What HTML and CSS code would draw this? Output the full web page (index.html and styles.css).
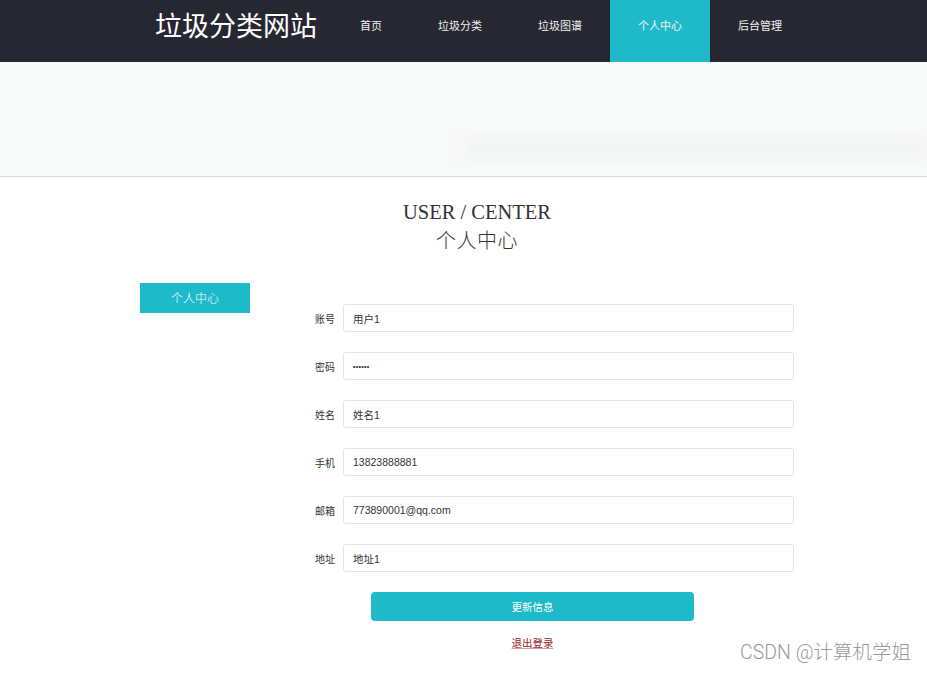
FILE: index.html
```html
<!DOCTYPE html>
<html lang="zh">
<head>
<meta charset="utf-8">
<title>垃圾分类网站 - 个人中心</title>
<link rel="stylesheet" href="styles.css">
</head>
<body>
<header class="topbar">
  <div class="topbar-inner">
    <div class="logo">垃圾分类网站</div>
    <nav class="nav">
      <a class="nav-item">首页</a>
      <a class="nav-item">垃圾分类</a>
      <a class="nav-item">垃圾图谱</a>
      <a class="nav-item active">个人中心</a>
      <a class="nav-item">后台管理</a>
    </nav>
  </div>
</header>
<div class="banner"><div class="banner-shade"></div></div>
<section class="page">
  <div class="page-title">
    <div class="en">USER / CENTER</div>
    <div class="cn">个人中心</div>
  </div>
  <div class="main">
    <aside class="side">
      <div class="side-item">个人中心</div>
    </aside>
    <form class="form">
      <div class="row"><label class="lbl">账号</label><input class="ipt" type="text" value="用户1"></div>
      <div class="row"><label class="lbl">密码</label><input class="ipt pwd" type="password" value="123456"></div>
      <div class="row"><label class="lbl">姓名</label><input class="ipt" type="text" value="姓名1"></div>
      <div class="row"><label class="lbl">手机</label><input class="ipt" type="text" value="13823888881"></div>
      <div class="row"><label class="lbl">邮箱</label><input class="ipt" type="text" value="773890001@qq.com"></div>
      <div class="row"><label class="lbl">地址</label><input class="ipt" type="text" value="地址1"></div>
      <div class="actions">
        <button class="btn" type="button">更新信息</button>
        <a class="logout">退出登录</a>
      </div>
    </form>
  </div>
</section>
<div class="watermark">CSDN @计算机学姐</div>
</body>
</html>
```
FILE: styles.css
```css
* { box-sizing: border-box; }
html, body { margin: 0; padding: 0; }
body {
  font-family: "Noto Sans CJK SC", "Noto Sans", sans-serif;
  color: #333;
  background: #fff;
  width: 927px;
  height: 673px;
  overflow: hidden;
  position: relative;
}
.topbar {
  height: 62px;
  background: #272731;
}
.topbar-inner {
  display: flex;
  align-items: flex-start;
  padding-left: 155px;
  height: 62px;
}
.logo {
  color: #fff;
  font-size: 27px;
  line-height: 50px;
  margin-right: 15px;
  white-space: nowrap;
}
.nav { display: flex; height: 62px; }
.nav-item {
  display: block;
  height: 62px;
  padding: 0 28px;
  line-height: 50px;
  font-size: 11px;
  color: #f2f2f2;
  white-space: nowrap;
}
.nav-item.active { background: #1fbac9; }
.banner {
  height: 115px;
  background: #f8f9f9;
  border-bottom: 1px solid #d9dada;
  display: flex;
  align-items: flex-end;
  justify-content: flex-end;
  padding-bottom: 14px;
}
.banner-shade {
  width: 470px;
  height: 28px;
  background: linear-gradient(to right, #f8f9f9, #f4f5f5 12px);
  filter: blur(3px);
}
.page { width: 674px; margin-left: 140px; }
.page-title {
  text-align: center;
  padding-top: 21px;
  color: #333;
}
.page-title .en {
  font-family: "Liberation Serif", "Times New Roman", serif;
  font-size: 20.5px;
  line-height: 28px;
}
.page-title .cn {
  font-size: 20px;
  font-weight: 300;
  line-height: 28px;
  letter-spacing: 0.5px;
}
.main {
  display: flex;
  margin-top: 29px;
}
.side { width: 110px; flex: none; }
.side-item {
  height: 30px;
  line-height: 30px;
  background: #1fbac9;
  color: #fff;
  font-size: 12px;
  text-align: center;
  font-weight: 300;
}
.form {
  padding-top: 21px;
  padding-left: 55px;
  flex: none;
}
.row {
  display: flex;
  align-items: center;
  gap: 8px;
  margin-bottom: 20px;
}
.lbl {
  width: 30px;
  text-align: right;
  font-size: 10px;
  color: #333;
}
.ipt {
  width: 451px;
  height: 28px;
  border: 1px solid #e3e4e4;
  border-radius: 3px;
  padding: 0 9px;
  font-family: "Liberation Sans", "Noto Sans CJK SC", sans-serif;
  font-size: 10.5px;
  color: #333;
  background: #fff;
  outline: none;
}
.ipt.pwd { font-size: 7px; letter-spacing: 0.3px; color: #222; }
.actions {
  display: flex;
  flex-direction: column;
  align-items: center;
  width: 323px;
  margin-left: 66px;
  margin-top: 4px;
}
.btn {
  width: 323px;
  height: 29px;
  border: none;
  border-radius: 4px;
  background: #1fbac9;
  color: #fff;
  font-family: "Noto Sans CJK SC", "Noto Sans", sans-serif;
  font-size: 10.5px;
  padding: 0;
}
.logout {
  margin-top: 14px;
  font-size: 10.5px;
  color: #9b1c24;
  text-decoration: underline;
  text-decoration-color: #d8a0a4;
  line-height: 16px;
}
.watermark {
  position: absolute;
  right: 16px;
  top: 640px;
  font-size: 19.5px;
  color: #9a9a9a;
  line-height: 26px;
  font-family: "Roboto", "Noto Sans CJK SC", sans-serif;
  font-weight: 300;
}
```
